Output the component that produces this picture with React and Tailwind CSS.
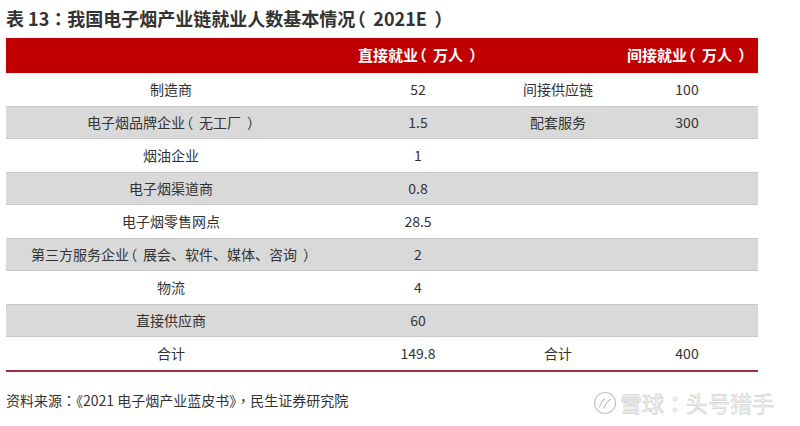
import React from 'react';

const rows = [
  ['制造商', '52', '间接供应链', '100'],
  ['电子烟品牌企业（无工厂）', '1.5', '配套服务', '300'],
  ['烟油企业', '1', '', ''],
  ['电子烟渠道商', '0.8', '', ''],
  ['电子烟零售网点', '28.5', '', ''],
  ['第三方服务企业（展会、软件、媒体、咨询）', '2', '', ''],
  ['物流', '4', '', ''],
  ['直接供应商', '60', '', ''],
  ['合计', '149.8', '合计', '400'],
];

// the source draws colon/comma centred and brackets with the space on the inside
const punct = /([：，（）])/;

function Txt({ children }) {
  const parts = String(children).split(punct);
  return (
    <>
      {parts.map((p, i) => {
        if (p === '（') return <span key={i} className="[font-feature-settings:'halt'] pl-[0.08em] mr-[0.42em]">{p}</span>;
        if (p === '）') return <span key={i} className="[font-feature-settings:'halt'] ml-[0.42em] pr-[0.08em]">{p}</span>;
        if (p === '：' || p === '，')
          return <span key={i} className="font-['Noto_Sans_CJK_TC',sans-serif]">{p}</span>;
        return <React.Fragment key={i}>{p}</React.Fragment>;
      })}
    </>
  );
}

export default function App() {
  return (
    <div className="w-[800px] h-[426px] bg-white overflow-hidden font-['Noto_Sans_CJK_SC','Noto_Sans',sans-serif]">
      <div className="pl-[6px] pt-[5px] h-[38px] text-[18px] font-bold text-[#333] leading-[26px]">
        <Txt>表 13：我国电子烟产业链就业人数基本情况（2021E）</Txt>
      </div>

      <div className="ml-[6px] w-[752px]">
        {/* header */}
        <div className="flex h-[35px] items-center bg-[#c00000] text-white text-[15px] font-bold">
          <div className="w-[330px]" />
          <div className="w-[164px] text-center"><Txt>直接就业（万人）</Txt></div>
          <div className="w-[116px]" />
          <div className="w-[142px] text-center"><Txt>间接就业（万人）</Txt></div>
        </div>

        {rows.map((r, i) => (
          <div
            key={i}
            className={`flex h-[33px] items-center text-[14px] text-[#333] ${
              i % 2 === 1 ? 'bg-[#d9d9d9] border-y border-[#c8c8c8]' : 'bg-white'
            }`}
          >
            <div className="w-[330px] text-center"><Txt>{r[0]}</Txt></div>
            <div className="w-[164px] text-center">{r[1]}</div>
            <div className="w-[116px] text-center">{r[2]}</div>
            <div className="w-[142px] text-center">{r[3]}</div>
          </div>
        ))}

        <div className="h-[2px] bg-[#a0303a]" />
      </div>

      <div className="flex items-center justify-between pl-[6px] pr-[26px] pt-[10px]">
        <div className="text-[14px] text-[#333]"><Txt>资料来源：《2021 电子烟产业蓝皮书》，民生证券研究院</Txt></div>
        <div className="flex items-center gap-[3px] text-[22px] pt-[4px] text-[#f7f7f7] [-webkit-text-stroke:0.5px_#c4c4c4]">
          <svg width="24" height="24" viewBox="0 0 24 24" fill="none" stroke="#c4c4c4" strokeWidth="1.2">
            <circle cx="12" cy="12" r="10.5" />
            <path d="M6.5 16 C 7.5 12, 9.5 9.5, 11.5 8" strokeLinecap="round" />
            <path d="M11 17 C 12.5 13, 14.5 10, 17.5 8.5" strokeLinecap="round" />
          </svg>
          <span>雪球<Txt>：</Txt>头号猎手</span>
        </div>
      </div>
    </div>
  );
}
